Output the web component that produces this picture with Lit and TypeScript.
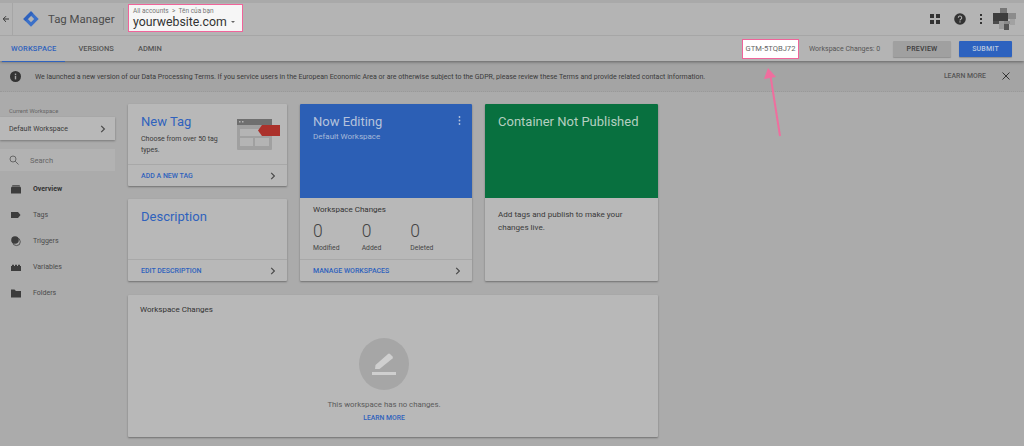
import { LitElement, html, css, svg } from "lit";
import { customElement } from "lit/decorators.js";

const chevron = html`<svg class="chev" width="6" height="8" viewBox="0 0 6 8"><path d="M1.200 .8L4.400 4 1.200 7.200" fill="none" stroke="#4a4a4a" stroke-width="1.200"/></svg>`;

const navIcons: Record<string, unknown> = {
  Overview: svg`<path d="M1 5q0-1 1-1.500h8q1 .5 1 1.500v5.500h-10z" fill="#3c3c3c"/><path d="M2 3q0-1 1-1h6q1 0 1 1v.2h-8z" fill="#5a5a5a"/>`,
  Tags: svg`<path d="M1 3h7l2.500 3-2.500 3h-7z" fill="#3c3c3c"/>`,
  Triggers: svg`<circle cx="5" cy="5" r="3.800" fill="#3c3c3c"/><circle cx="6.500" cy="6.800" r="3.800" fill="none" stroke="#3c3c3c" stroke-width=".8"/>`,
  Variables: svg`<path d="M1 5h1v-1.200h2v1.200h1v-1.200h2v1.200h1v-1.200h2v1.200h1v5h-10z" fill="#3c3c3c"/>`,
  Folders: svg`<path d="M1 2.500h3.500l1.500 1.500h5v6.500h-10z" fill="#3c3c3c"/>`,
};

@customElement("app-root")
export class AppRoot extends LitElement {
  static styles = css`
    :host {
      display: block;
      width: 1024px;
      height: 446px;
      overflow: hidden;
      position: relative;
      background: #ababab;
      font-family: Roboto, "Liberation Sans", sans-serif;
      color: #3a3a3a;
    }
    .head {
      background: #b4b4b4;
      height: 61px;
      box-sizing: border-box;
      border-top: 3px solid #a9a9a9;
      box-shadow: 0 1px 3px rgba(0, 0, 0, 0.4);
      position: relative;
    }
    .top {
      height: 32px;
      display: flex;
      align-items: center;
      border-bottom: 1px solid #a6a6a6;
    }
    .back {
      width: 13px;
      height: 100%;
      display: flex;
      align-items: center;
      justify-content: center;
      border-right: 1px solid #a6a6a6;
      box-sizing: border-box;
      flex: none;
    }
    .logo {
      margin-left: 10px;
      flex: none;
    }
    .brand {
      margin-left: 9px;
      font-size: 11.4px;
      color: #4c4c4c;
      width: 76px;
      flex: none;
      height: 22px;
      line-height: 22px;
      white-space: nowrap;
      border-right: 1px solid #a6a6a6;
      box-sizing: border-box;
    }
    .crumb {
      margin-left: 4px;
      width: 115px;
      height: 28px;
      box-sizing: border-box;
      background: #f6f6f6;
      border: 1px solid #f0649a;
      padding: 2px 0 0 4px;
      flex: none;
      margin-top: -3px;
    }
    .crumb small {
      display: block;
      font-size: 6.5px;
      line-height: 8px;
      color: #777;
      white-space: nowrap;
    }
    .crumb b {
      display: flex;
      align-items: center;
      font-weight: 400;
      font-size: 12.3px;
      line-height: 15px;
      color: #333;
      white-space: nowrap;
    }
    .caret {
      margin-left: 4px;
      width: 0;
      height: 0;
      border: 2.500px solid transparent;
      border-top-color: #666;
      border-bottom: 0;
    }
    .tools {
      margin-left: auto;
      display: flex;
      align-items: center;
      height: 100%;
      padding-right: 8px;
    }
    .tools svg {
      flex: none;
    }
    .tools .help {
      margin-left: 14px;
    }
    .tools .more {
      margin-left: 14px;
    }
    .tools .avatar {
      margin-left: 11px;
    }
    .tabs {
      height: 26px;
      display: flex;
      align-items: center;
      font-size: 7.5px;
      font-weight: 500;
      letter-spacing: 0.2px;
      color: #555;
    }
    .tab {
      height: 100%;
      line-height: 25px;
      box-sizing: border-box;
      white-space: nowrap;
    }
    .tab.on {
      color: #2f62bd;
      border-bottom: 1px solid #2f62bd;
      margin-left: 2px;
      padding: 0 9px;
      letter-spacing: 0.15px;
    }
    .tab.versions {
      margin-left: 13px;
      letter-spacing: 0;
    }
    .tab.admin {
      margin-left: 24px;
      letter-spacing: 0;
    }
    .gtm {
      margin-left: auto;
      width: 57px;
      height: 20px;
      box-sizing: border-box;
      background: #fff;
      border: 1px solid #f0649a;
      font-size: 7.6px;
      font-weight: 400;
      text-align: center;
      line-height: 18px;
      color: #666;
      letter-spacing: 0;
    }
    .changes {
      margin-left: 10px;
      font-size: 7px;
      font-weight: 400;
      color: #555;
      width: 84px;
      letter-spacing: 0;
      white-space: nowrap;
    }
    .btn {
      width: 58px;
      height: 16px;
      line-height: 16px;
      text-align: center;
      font-size: 7px;
      font-weight: 500;
      border-radius: 1px;
      background: #a0a0a0;
      color: #3c3c3c;
      box-shadow: 0 1px 1px rgba(0, 0, 0, 0.2);
    }
    .btn.go {
      margin: 0 12px 0 8px;
      width: 53px;
      background: #2d62bf;
      color: #b9c7e0;
    }
    .note {
      height: 31px;
      background: #a4a4a4;
      border-bottom: 1px dotted #999;
      box-sizing: border-box;
      display: flex;
      align-items: center;
      font-size: 7.03px;
      color: #3a3a3a;
      padding-left: 10px;
      white-space: nowrap;
    }
    .note p {
      margin: 0 0 0 14px;
    }
    .note .more {
      margin-left: auto;
      color: #555;
      font-weight: 500;
      font-size: 6.9px;
    }
    .note svg.x {
      margin: 0 14px 0 16px;
    }
    .body {
      display: flex;
    }
    .side {
      width: 115px;
      flex: none;
      padding-top: 15px;
    }
    .label {
      font-size: 5.8px;
      line-height: 8px;
      padding-left: 9px;
      color: #666;
    }
    .ws {
      margin-top: 2px;
      height: 23px;
      background: #b8b8b8;
      box-shadow: 0 1px 2px rgba(0, 0, 0, 0.3);
      display: flex;
      align-items: center;
      justify-content: space-between;
      padding: 0 9px;
      font-size: 7px;
      color: #3a3a3a;
    }
    .search {
      margin-top: 9px;
      height: 22px;
      background: #b2b2b2;
      display: flex;
      align-items: center;
      font-size: 7.5px;
      color: #666;
      padding-left: 9px;
      gap: 11px;
    }
    .nav {
      display: flex;
      align-items: center;
      height: 26px;
      padding-left: 10px;
      gap: 11px;
      font-size: 7px;
      color: #4a4a4a;
    }
    .nav.first {
      margin-top: 5px;
    }
    .nav.on {
      font-weight: 700;
      color: #333;
    }
    .main {
      margin: 12px 0 0 13px;
      width: 530px;
      display: grid;
      grid-template-columns: 159px 172px 173px;
      grid-template-rows: 82px 82px 143px;
      gap: 13px;
    }
    .card {
      background: #b8b8b8;
      box-shadow: 0 1px 2px rgba(0, 0, 0, 0.35);
      display: flex;
      flex-direction: column;
      min-width: 0;
      border-radius: 1px;
      overflow: hidden;
    }
    .tall {
      grid-row: span 2;
    }
    .wide {
      grid-column: span 3;
      margin-top: 1px;
    }
    .pad {
      flex: 1;
      padding: 10px 13px 0;
      position: relative;
    }
    .title {
      font-size: 13px;
      line-height: 16px;
      color: #2f62bd;
    }
    .desc {
      font-size: 7px;
      line-height: 11px;
      margin-top: 4px;
      color: #3a3a3a;
      width: 85px;
    }
    .art {
      position: absolute;
      right: 7px;
      top: 15px;
    }
    .foot {
      height: 21px;
      border-top: 1px solid #a8a8a8;
      padding: 0 11px 0 13px;
      display: flex;
      align-items: center;
      justify-content: space-between;
      font-size: 7px;
      font-weight: 500;
      color: #2f62bd;
      white-space: nowrap;
    }
    .hero {
      height: 94px;
      padding: 10px 13px;
      box-sizing: border-box;
      color: #b5c3dc;
      position: relative;
      flex: none;
    }
    .hero.blue {
      background: #2c5fb5;
    }
    .hero.green {
      background: #08703f;
      color: #b4cfc0;
    }
    .hero .name {
      font-size: 13px;
      line-height: 16px;
      white-space: nowrap;
    }
    .hero .sub {
      font-size: 8px;
      line-height: 10px;
      margin-top: 2px;
      color: #a7bad9;
    }
    .dots {
      position: absolute;
      right: 11px;
      top: 12px;
    }
    .sum {
      flex: 1;
      padding: 7px 13px 0;
    }
    .sum h4,
    .wide h4 {
      margin: 0;
      font-size: 8px;
      line-height: 10px;
      font-weight: 400;
      color: #333;
    }
    .wide h4 {
      padding: 10px 12px 0;
    }
    .stats {
      display: flex;
      margin-top: 6px;
    }
    .stat {
      width: 49px;
      font-size: 6.8px;
      line-height: 10px;
      color: #444;
    }
    .stat span {
      display: block;
      font-size: 17.5px;
      line-height: 20px;
      font-weight: 300;
      color: #444;
      margin-bottom: 2px;
    }
    .live {
      padding: 10px 13px;
      font-size: 8.1px;
      line-height: 13px;
      color: #3a3a3a;
    }
    .empty {
      display: flex;
      flex-direction: column;
      align-items: center;
      margin-top: 23px;
      padding-right: 18px;
      font-size: 7.8px;
      color: #5a5a5a;
    }
    .disc {
      width: 50px;
      height: 52px;
      border-radius: 50%;
      background: #a6a6a6;
      display: flex;
      align-items: center;
      justify-content: center;
    }
    .empty p {
      margin: 10px 0 0;
      line-height: 10px;
    }
    .empty a {
      margin-top: 4px;
      font-size: 6.8px;
      line-height: 8px;
      font-weight: 500;
      color: #2f62bd;
    }
    .arrow {
      position: absolute;
      left: 755px;
      top: 60px;
      pointer-events: none;
    }
  `;

  render() {
    return html`
      <div class="head">
        <div class="top">
          <div class="back">
            <svg width="8" height="8" viewBox="0 0 8 8"><path d="M7 4H1.500M4 1.200L1.200 4 4 6.800" fill="none" stroke="#333" stroke-width="1"/></svg>
          </div>
          <svg class="logo" width="16" height="16" viewBox="0 0 16 16">
            <path d="M8 .3L15.700 8 8 15.700 .3 8z" fill="#3b70c8"/>
            <path d="M8 4.800L11.200 8 8 11.200 4.800 8z" fill="#b4b4b4"/>
            <path d="M8 .3l2.300 2.300-7.700 7.700-2.300-2.300z" fill="#2f62bd"/>
          </svg>
          <div class="brand">Tag Manager</div>
          <div class="crumb">
            <small>All accounts &nbsp;&gt;&nbsp; Tên của bạn</small>
            <b>yourwebsite.com<i class="caret"></i></b>
          </div>
          <div class="tools">
            <svg width="10" height="10" viewBox="0 0 10 10" fill="#333"><rect x="0" y="0" width="4" height="4"/><rect x="6" y="0" width="4" height="4"/><rect x="0" y="6" width="4" height="4"/><rect x="6" y="6" width="4" height="4"/></svg>
            <svg class="help" width="12" height="12" viewBox="0 0 12 12"><circle cx="6" cy="6" r="5.800" fill="#333"/><path d="M4.300 4.700a1.700 1.700 0 1 1 2.500 1.500c-.6.3-.8.6-.8 1.200" fill="none" stroke="#b4b4b4" stroke-width="1.100"/><rect x="5.400" y="8.300" width="1.200" height="1.200" fill="#b4b4b4"/></svg>
            <svg class="more" width="2" height="10" viewBox="0 0 2 10" fill="#333"><rect y="0" width="2" height="2"/><rect y="4" width="2" height="2"/><rect y="8" width="2" height="2"/></svg>
            <svg class="avatar" width="23" height="22" viewBox="0 0 23 22"><rect x="7" y="0" width="7" height="5" fill="#777"/><rect x="0" y="5" width="15" height="8" fill="#3d3d3d"/><rect x="15" y="5" width="8" height="6" fill="#8c8c8c"/><rect x="0" y="13" width="6" height="3" fill="#4c4c4c"/><rect x="6" y="13" width="5" height="8" fill="#9a9a9a"/><rect x="11" y="16" width="5" height="6" fill="#555"/><rect x="11" y="13" width="6" height="3" fill="#8a8a8a"/><rect x="17" y="11" width="5" height="6" fill="#a2a2a2"/></svg>
          </div>
        </div>
        <div class="tabs">
          <div class="tab on">WORKSPACE</div>
          <div class="tab versions">VERSIONS</div>
          <div class="tab admin">ADMIN</div>
          <div class="gtm">GTM-5TQBJ72</div>
          <div class="changes">Workspace Changes: 0</div>
          <div class="btn">PREVIEW</div>
          <div class="btn go">SUBMIT</div>
        </div>
      </div>
      <div class="note">
        <svg width="11" height="11" viewBox="0 0 11 11"><circle cx="5.500" cy="5.500" r="5.500" fill="#333"/><rect x="4.800" y="4.800" width="1.400" height="3.600" fill="#a4a4a4"/><rect x="4.800" y="2.600" width="1.400" height="1.400" fill="#a4a4a4"/></svg>
        <p>We launched a new version of our Data Processing Terms. If you service users in the European Economic Area or are otherwise subject to the GDPR, please review these Terms and provide related contact information.</p>
        <span class="more">LEARN MORE</span>
        <svg class="x" width="8" height="8" viewBox="0 0 8 8"><path d="M.5.500l7 7M7.500.5l-7 7" stroke="#333" stroke-width="1"/></svg>
      </div>
      <div class="body">
        <div class="side">
          <div class="label">Current Workspace</div>
          <div class="ws">Default Workspace ${chevron}</div>
          <div class="search">
            <svg width="10" height="10" viewBox="0 0 10 10"><circle cx="4" cy="4" r="3" fill="none" stroke="#666"/><path d="M6.200 6.200L9.500 9.500" stroke="#666"/></svg>
            <span>Search</span>
          </div>
          ${Object.keys(navIcons).map(
            (n, i) => html`<div class="nav ${i === 0 ? "first on" : ""}">
              <svg width="12" height="12" viewBox="0 0 12 12">${navIcons[n]}</svg>${n}
            </div>`
          )}
        </div>
        <div class="main">
          <div class="card">
            <div class="pad">
              <div class="title">New Tag</div>
              <div class="desc">Choose from over 50 tag types.</div>
              <svg class="art" width="44" height="32" viewBox="0 0 44 32">
                <rect x="1" y="0" width="35" height="31" rx="1" fill="#a0a0a0"/>
                <rect x="1" y="0" width="35" height="6" fill="#6f6f6f"/>
                <rect x="3" y="2" width="1.500" height="1.500" fill="#b4b4b4"/>
                <rect x="6" y="2" width="1.500" height="1.500" fill="#b4b4b4"/>
                <rect x="4" y="10" width="30" height="7" fill="#b4b4b4"/>
                <rect x="4" y="19" width="13" height="8" fill="#b4b4b4"/>
                <rect x="19" y="19" width="14" height="8" fill="#b4b4b4"/>
                <path d="M26 6h18v11h-18l-4-5.500z" fill="#ab312b"/>
              </svg>
            </div>
            <div class="foot">ADD A NEW TAG ${chevron}</div>
          </div>
          <div class="card tall">
            <div class="hero blue">
              <div class="name">Now Editing</div>
              <div class="sub">Default Workspace</div>
              <svg class="dots" width="3" height="9" viewBox="0 0 3 9" fill="#b5c3dc"><circle cx="1.500" cy="1" r=".9"/><circle cx="1.500" cy="4.500" r=".9"/><circle cx="1.500" cy="8" r=".9"/></svg>
            </div>
            <div class="sum">
              <h4>Workspace Changes</h4>
              <div class="stats">
                <div class="stat"><span>0</span>Modified</div>
                <div class="stat"><span>0</span>Added</div>
                <div class="stat"><span>0</span>Deleted</div>
              </div>
            </div>
            <div class="foot">MANAGE WORKSPACES ${chevron}</div>
          </div>
          <div class="card tall">
            <div class="hero green"><div class="name">Container Not Published</div></div>
            <div class="live">Add tags and publish to make your changes live.</div>
          </div>
          <div class="card">
            <div class="pad"><div class="title">Description</div></div>
            <div class="foot">EDIT DESCRIPTION ${chevron}</div>
          </div>
          <div class="card wide">
            <h4>Workspace Changes</h4>
            <div class="empty">
              <div class="disc">
                <svg width="24" height="24" viewBox="0 0 24 24">
                  <path d="M3 17l.5-4L16 2q1-.8 2 0l2.500 2.500q.7 1 0 2L7.500 17z" fill="#cfcfcf"/>
                  <rect x="0" y="20" width="24" height="3" fill="#cfcfcf"/>
                </svg>
              </div>
              <p>This workspace has no changes.</p>
              <a>LEARN MORE</a>
            </div>
          </div>
        </div>
      </div>
      <svg class="arrow" width="34" height="80" viewBox="0 0 34 80">
        <path d="M25 76L15.500 16" stroke="#ef6e9e" stroke-width="2" fill="none"/>
        <path d="M13 8L21 17 9 19z" fill="#ef6e9e"/>
      </svg>
    `;
  }
}
